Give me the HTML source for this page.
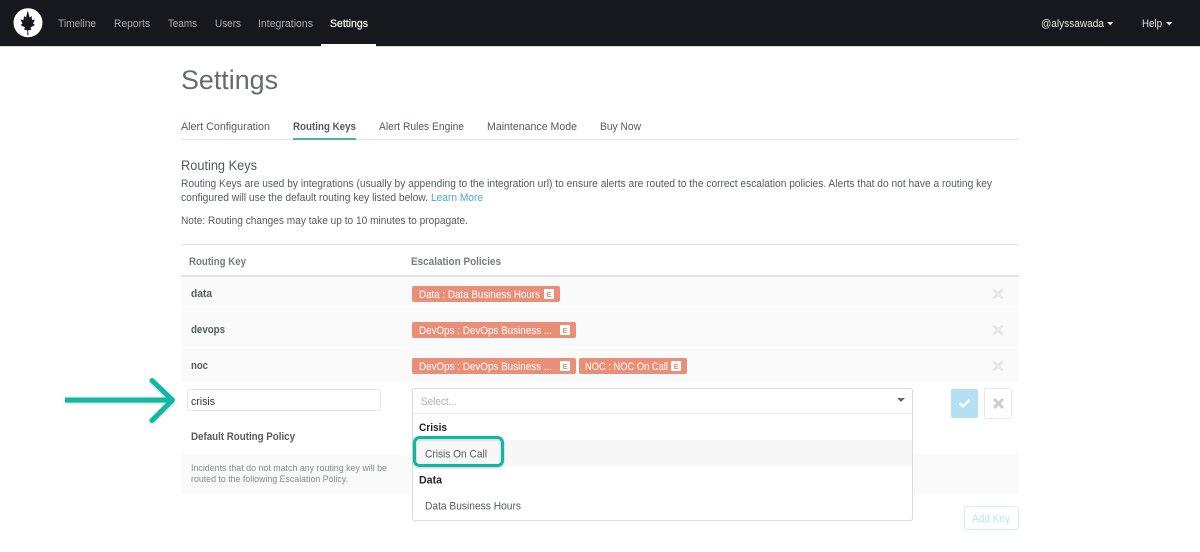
<!DOCTYPE html>
<html><head><meta charset="utf-8"><title>Settings</title>
<style>
html,body{margin:0;padding:0;background:#fff;width:1200px;height:552px;overflow:hidden}
svg{display:block;filter:blur(.3px)}
text{font-family:"Liberation Sans",sans-serif;font-size:11px;fill:#555b5f}
.n{fill:#a9abad}
.b{font-weight:bold}
.tg{fill:#fff;font-size:11px}
.e{fill:#e88e75;font-size:7.5px;font-weight:bold}
</style></head><body>
<svg width="1200" height="552" viewBox="0 0 1200 552" xmlns="http://www.w3.org/2000/svg">
<defs><filter id="s" x="-10%" y="-30%" width="120%" height="170%"><feDropShadow dx="0" dy="1" stdDeviation="1.2" flood-color="#000" flood-opacity=".22"/></filter></defs>
<!-- header -->
<rect width="1200" height="46" fill="#16181d"/>
<rect y="46" width="1200" height="1" fill="#d8d8d8"/>
<rect x="321" y="44" width="55" height="3" fill="#fff"/>
<circle cx="28" cy="22.700" r="14.500" fill="#fff"/>
<path d="M27.300 35 L27.500 30.500 L24 29.500 L25 27.500 L20.500 25 L22.500 23.500 L20.500 19.500 L23.500 20 L24 16 L26 17.500 L27.800 10.500 L29.600 17.500 L31.600 16 L32 20 L35 19.500 L33 23.500 L35 25 L30.500 27.500 L31.500 29.500 L28.200 30.500 L28.400 35 Z" fill="#16181d"/>
<text x="58" y="27" class="n" textLength="38" lengthAdjust="spacingAndGlyphs">Timeline</text>
<text x="114" y="27" class="n" textLength="36" lengthAdjust="spacingAndGlyphs">Reports</text>
<text x="168" y="27" class="n" textLength="29" lengthAdjust="spacingAndGlyphs">Teams</text>
<text x="215" y="27" class="n" textLength="26" lengthAdjust="spacingAndGlyphs">Users</text>
<text x="258" y="27" class="n" textLength="55" lengthAdjust="spacingAndGlyphs">Integrations</text>
<text x="330" y="27" style="fill:#f4f4f4" textLength="38" lengthAdjust="spacingAndGlyphs" stroke="#f4f4f4" stroke-width=".25">Settings</text>
<text x="1041" y="27" style="fill:#e4e4e4" textLength="63" lengthAdjust="spacingAndGlyphs">@alyssawada</text>
<path d="M1107 22h6.500l-3.250 3.500z" fill="#e4e4e4"/>
<text x="1142" y="27" style="fill:#e4e4e4" textLength="20" lengthAdjust="spacingAndGlyphs">Help</text>
<path d="M1166 22h6.500l-3.250 3.500z" fill="#e4e4e4"/>
<!-- title + tabs -->
<text x="181" y="89" style="font-size:27px;fill:#666b6e" textLength="97" lengthAdjust="spacingAndGlyphs">Settings</text>
<rect x="181" y="139" width="838" height="1" fill="#e6e6e6"/>
<rect x="293" y="138" width="63" height="2" fill="#4db39e"/>
<text x="181" y="130" textLength="89" lengthAdjust="spacingAndGlyphs">Alert Configuration</text>
<text x="293" y="130" class="b" textLength="63" lengthAdjust="spacingAndGlyphs">Routing Keys</text>
<text x="379" y="130" textLength="85" lengthAdjust="spacingAndGlyphs">Alert Rules Engine</text>
<text x="487" y="130" textLength="90" lengthAdjust="spacingAndGlyphs">Maintenance Mode</text>
<text x="600" y="130" textLength="41" lengthAdjust="spacingAndGlyphs">Buy Now</text>
<!-- intro -->
<text x="181" y="170" style="font-size:13.500px" textLength="76" lengthAdjust="spacingAndGlyphs">Routing Keys</text>
<text x="181" y="187" textLength="811" lengthAdjust="spacingAndGlyphs">Routing Keys are used by integrations (usually by appending to the integration url) to ensure alerts are routed to the correct escalation policies. Alerts that do not have a routing key</text>
<text x="181" y="201" textLength="247" lengthAdjust="spacingAndGlyphs">configured will use the default routing key listed below.</text>
<text x="431" y="201" style="fill:#4aa8cf" textLength="52" lengthAdjust="spacingAndGlyphs">Learn More</text>
<text x="181" y="224" textLength="287" lengthAdjust="spacingAndGlyphs">Note: Routing changes may take up to 10 minutes to propagate.</text>
<!-- table -->
<rect x="181" y="244" width="838" height="1" fill="#e4e4e4"/>
<text x="189" y="265" class="b" style="fill:#777b7e" textLength="57" lengthAdjust="spacingAndGlyphs">Routing Key</text>
<text x="411" y="265" class="b" style="fill:#777b7e" textLength="90" lengthAdjust="spacingAndGlyphs">Escalation Policies</text>
<rect x="181" y="275" width="838" height="2" fill="#e2e2e2"/>
<rect x="181" y="277" width="838" height="34" fill="#fafafa"/>
<rect x="181" y="312" width="838" height="35" fill="#fafafa"/>
<rect x="181" y="348" width="838" height="34" fill="#fafafa"/>
<text x="191" y="297" class="b" textLength="21" lengthAdjust="spacingAndGlyphs">data</text>
<text x="191" y="333" class="b" textLength="34" lengthAdjust="spacingAndGlyphs">devops</text>
<text x="191" y="369" class="b" textLength="17" lengthAdjust="spacingAndGlyphs">noc</text>
<!-- tags -->
<rect x="412" y="286" width="148" height="16" rx="2" fill="#e98f77"/>
<text x="419" y="298" class="tg" textLength="121" lengthAdjust="spacingAndGlyphs">Data : Data Business Hours</text>
<rect x="544" y="289" width="10" height="10" rx="1" fill="#fff"/><text x="546.600" y="297" class="e">E</text>
<rect x="412" y="322" width="164" height="16" rx="2" fill="#e98f77"/>
<text x="419" y="334" class="tg" textLength="133" lengthAdjust="spacingAndGlyphs">DevOps : DevOps Business ...</text>
<rect x="560" y="325" width="10" height="10" rx="1" fill="#fff"/><text x="562.600" y="333" class="e">E</text>
<rect x="412" y="358" width="164" height="16" rx="2" fill="#e98f77"/>
<text x="419" y="370" class="tg" textLength="133" lengthAdjust="spacingAndGlyphs">DevOps : DevOps Business ...</text>
<rect x="560" y="361" width="10" height="10" rx="1" fill="#fff"/><text x="562.600" y="369" class="e">E</text>
<rect x="579" y="358" width="108" height="16" rx="2" fill="#e98f77"/>
<text x="585" y="370" class="tg" textLength="83" lengthAdjust="spacingAndGlyphs">NOC : NOC On Call</text>
<rect x="671" y="361" width="10" height="10" rx="1" fill="#fff"/><text x="673.600" y="369" class="e">E</text>
<!-- row x marks -->
<g stroke="#e8e8e8" stroke-width="3" fill="none">
<path d="M993.500 289.500l9 9m0-9l-9 9"/>
<path d="M993.500 325.500l9 9m0-9l-9 9"/>
<path d="M993.500 361.500l9 9m0-9l-9 9"/>
</g>
<!-- default section -->
<rect x="181" y="454" width="838" height="40" fill="#fafafa"/>
<text x="191" y="440" class="b" textLength="104" lengthAdjust="spacingAndGlyphs">Default Routing Policy</text>
<text x="191" y="471" style="font-size:9.500px;fill:#85898c" textLength="196" lengthAdjust="spacingAndGlyphs">Incidents that do not match any routing key will be</text>
<text x="191" y="482" style="font-size:9.500px;fill:#85898c" textLength="157" lengthAdjust="spacingAndGlyphs">routed to the following Escalation Policy.</text>
<!-- input -->
<rect x="187.500" y="389.500" width="193" height="21" rx="3" fill="#fff" stroke="#e4e4e4"/>
<text x="191" y="405" style="fill:#333" textLength="24" lengthAdjust="spacingAndGlyphs">crisis</text>
<!-- select -->
<rect x="412.500" y="388.500" width="500" height="132" rx="2" fill="#fff" stroke="#dcdcdc"/>
<rect x="413" y="413" width="499" height="1" fill="#e8e8e8"/>
<text x="421" y="405" style="fill:#b0b0b0" textLength="36" lengthAdjust="spacingAndGlyphs">Select...</text>
<path d="M897 398h8l-4 4z" fill="#666"/>
<text x="419" y="431" class="b" style="fill:#222" textLength="28" lengthAdjust="spacingAndGlyphs">Crisis</text>
<rect x="413" y="440" width="499" height="26" fill="#f7f7f7"/>
<text x="425" y="457.500" textLength="62" lengthAdjust="spacingAndGlyphs">Crisis On Call</text>
<text x="419" y="483.500" class="b" style="fill:#222" textLength="23" lengthAdjust="spacingAndGlyphs">Data</text>
<text x="425" y="509.500" textLength="96" lengthAdjust="spacingAndGlyphs">Data Business Hours</text>
<!-- highlight -->
<rect x="414.500" y="437.500" width="88" height="28" rx="5" fill="none" stroke="#10b8a6" stroke-width="3" filter="url(#s)"/>
<!-- buttons -->
<rect x="951" y="389" width="27" height="29" rx="2" fill="#b3e0f2"/>
<path d="M959.500 403l3.500 3.500l6.500-6.500" fill="none" stroke="#fff" stroke-width="2.500"/>
<rect x="984.500" y="388.500" width="27" height="30" rx="2" fill="#fff" stroke="#e8e8e8"/>
<path d="M994 399l9 9m0-9l-9 9" fill="none" stroke="#cccccc" stroke-width="3"/>
<rect x="964.500" y="506.500" width="54" height="23" rx="2" fill="#fff" stroke="#d5eef8"/>
<text x="972" y="522" style="fill:#bde3f3" textLength="38" lengthAdjust="spacingAndGlyphs">Add Key</text>
<!-- arrow -->
<g fill="none" stroke="#10b8a6" filter="url(#s)">
<path d="M65 400H171" stroke-width="5"/>
<path d="M152 380.500L172.500 400L152 420.500" stroke-width="5" stroke-linecap="round" stroke-linejoin="round"/>
</g>
</svg>
</body></html>
